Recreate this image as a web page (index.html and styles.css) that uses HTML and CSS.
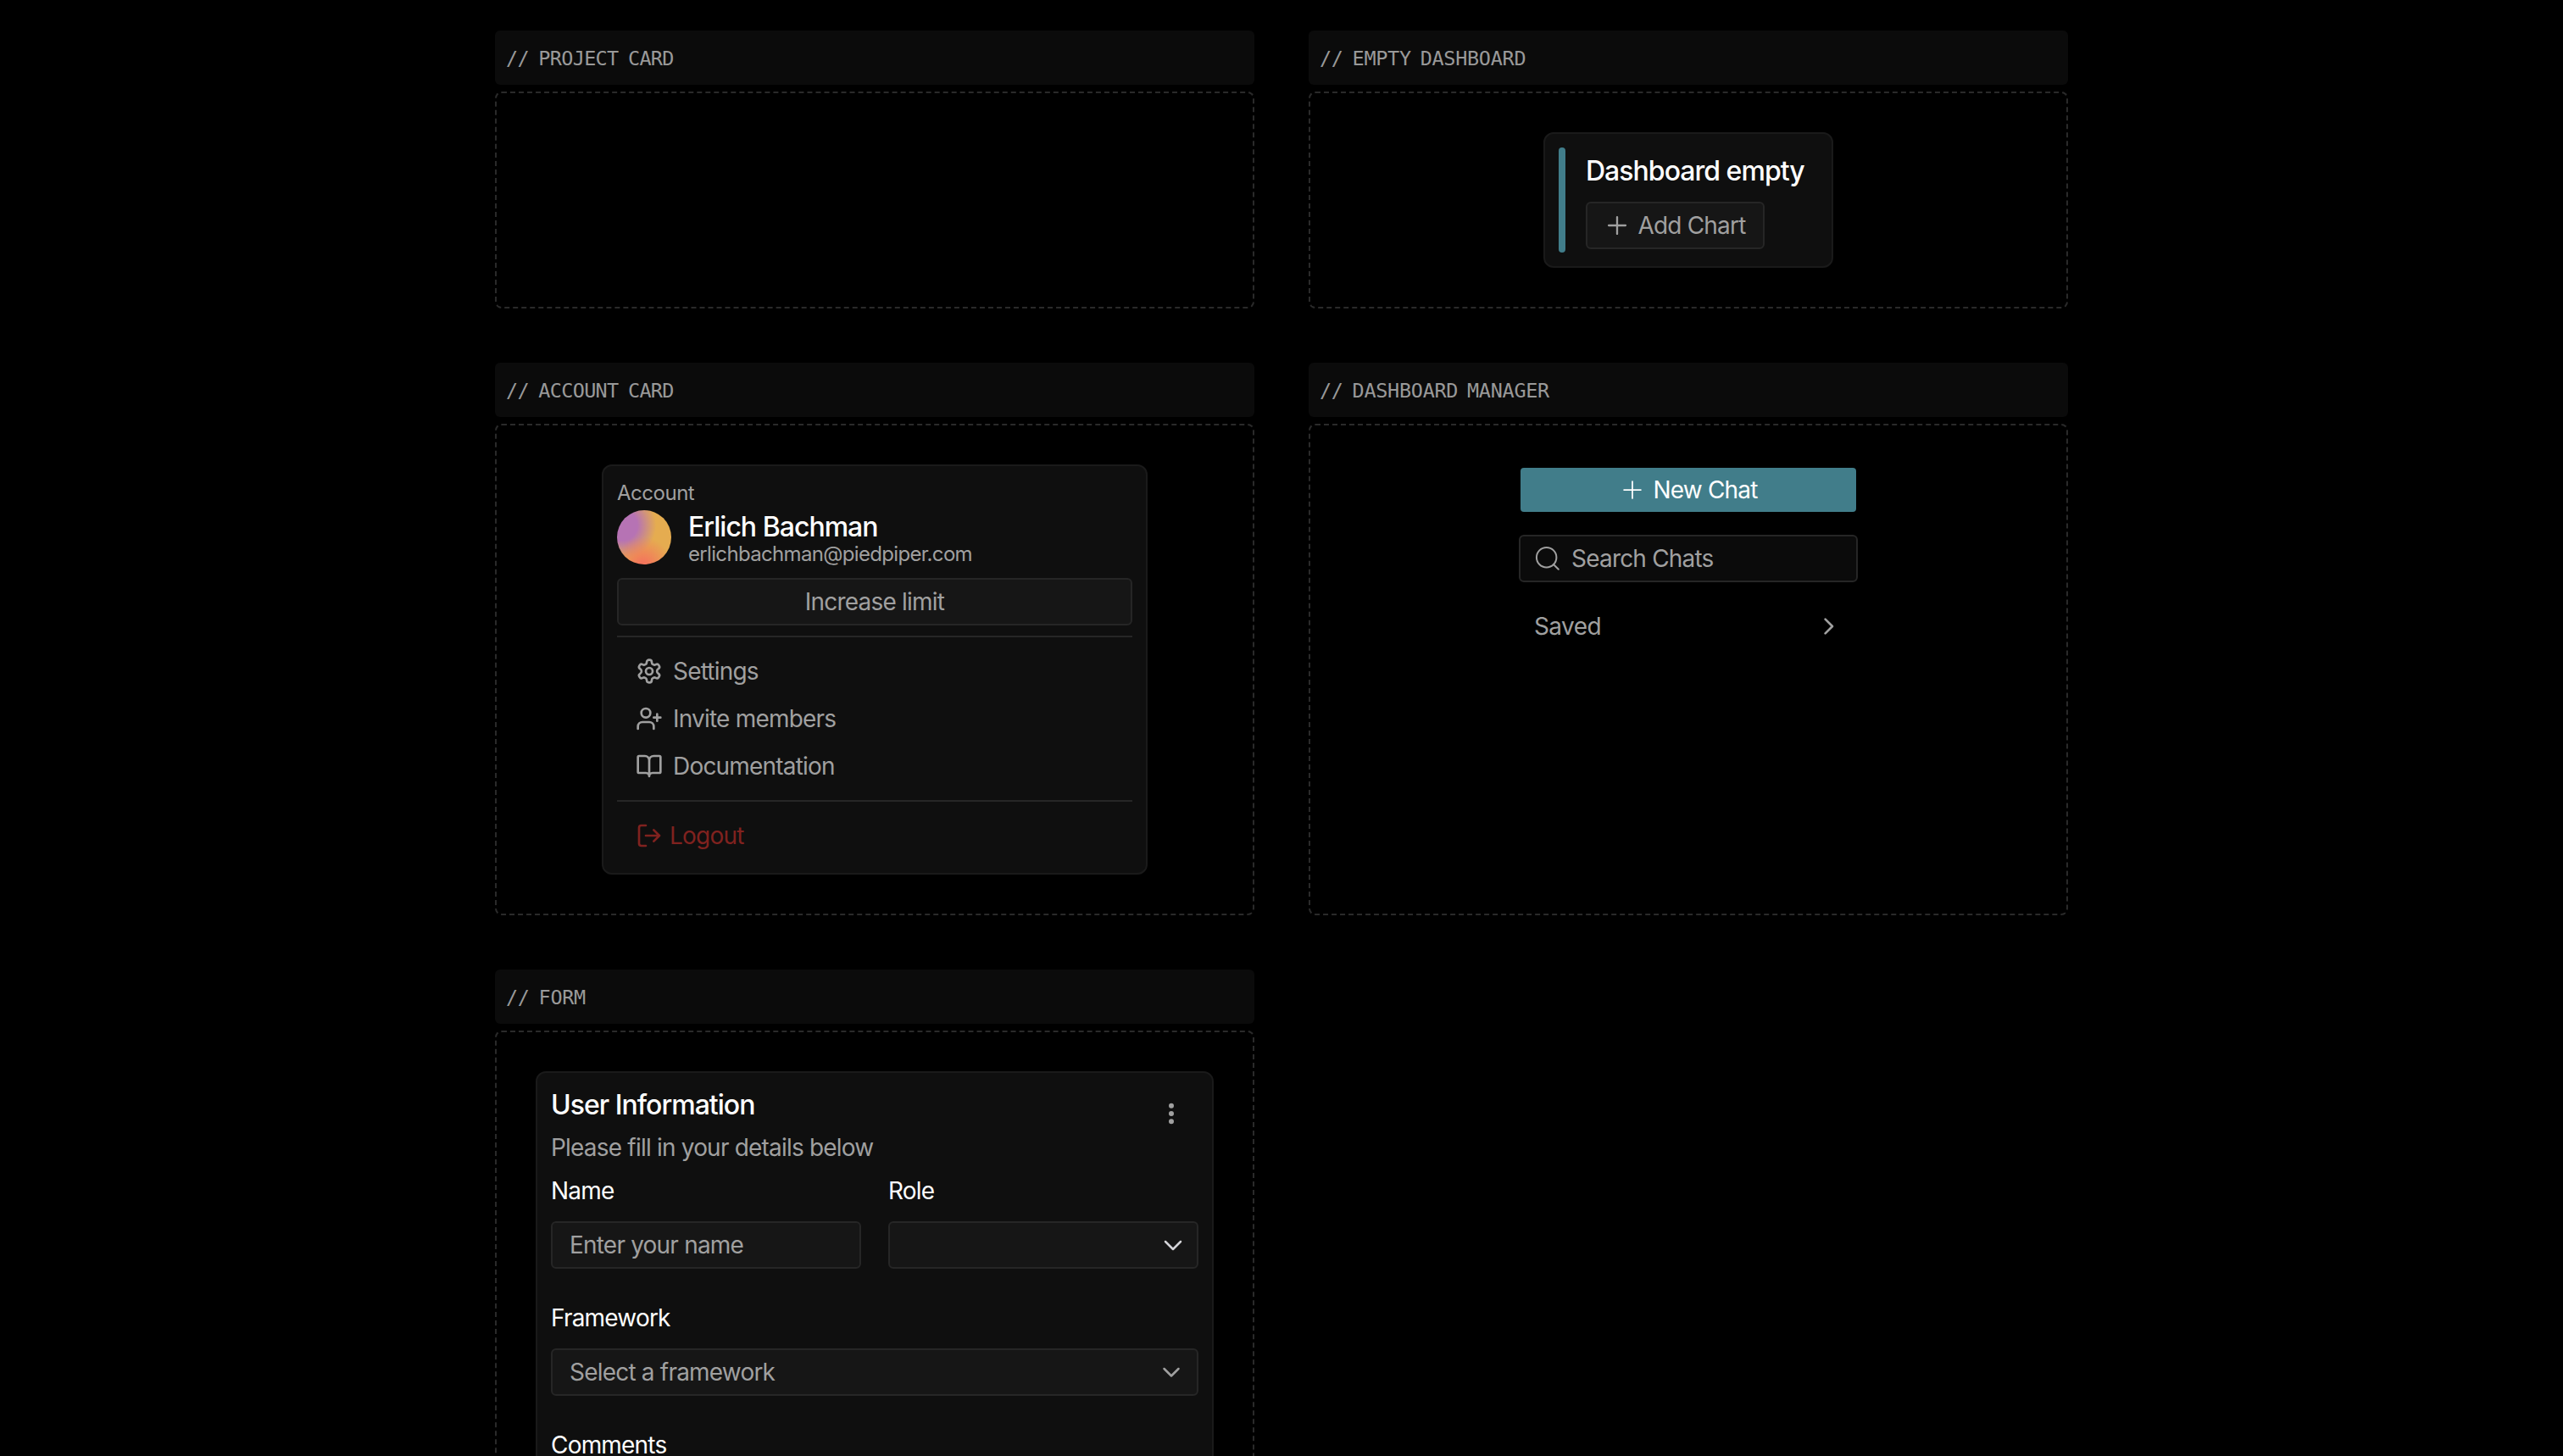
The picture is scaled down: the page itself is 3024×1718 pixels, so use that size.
FILE: index.html
```html
<!DOCTYPE html>
<html lang="en">
<head>
  <meta charset="UTF-8">
  <meta name="viewport" content="width=device-width, initial-scale=1.0">
  <title>Components</title>
  <link rel="stylesheet" href="styles.css">
</head>
<body>
  <main class="showcase">
    <section class="demo">
      <h2 class="demo-title">// PROJECT CARD</h2>
      <div class="demo-box"></div>
    </section>

    <section class="demo">
      <h2 class="demo-title loose">// EMPTY DASHBOARD</h2>
      <div class="demo-box">
        <div class="card empty-card">
          <div class="accent-bar"></div>
          <div class="empty-content">
            <h3 class="heading">Dashboard empty</h3>
            <button class="btn add-btn">
              <svg class="icon plus" viewBox="0 0 24 24"><path d="M3.5 12h17M12 3.5v17"/></svg>
              <span>Add Chart</span>
            </button>
          </div>
        </div>
      </div>
    </section>

    <section class="demo">
      <h2 class="demo-title">// ACCOUNT CARD</h2>
      <div class="demo-box">
        <div class="card account-card">
          <p class="small account-label">Account</p>
          <div class="profile">
            <div class="avatar"></div>
            <div class="profile-text">
              <h3 class="heading">Erlich Bachman</h3>
              <p class="small email">erlichbachman@piedpiper.com</p>
            </div>
          </div>
          <button class="btn limit-btn">Increase limit</button>
          <hr>
          <nav class="menu">
            <a class="menu-item">
              <svg class="icon" viewBox="0 0 24 24"><path d="M12.22 2h-.44a2 2 0 0 0-2 2v.18a2 2 0 0 1-1 1.73l-.43.25a2 2 0 0 1-2 0l-.15-.08a2 2 0 0 0-2.73.73l-.22.38a2 2 0 0 0 .73 2.73l.15.1a2 2 0 0 1 1 1.72v.51a2 2 0 0 1-1 1.74l-.15.09a2 2 0 0 0-.73 2.73l.22.38a2 2 0 0 0 2.73.73l.15-.08a2 2 0 0 1 2 0l.43.25a2 2 0 0 1 1 1.73V20a2 2 0 0 0 2 2h.44a2 2 0 0 0 2-2v-.18a2 2 0 0 1 1-1.73l.43-.25a2 2 0 0 1 2 0l.15.08a2 2 0 0 0 2.73-.73l.22-.39a2 2 0 0 0-.73-2.73l-.15-.08a2 2 0 0 1-1-1.74v-.5a2 2 0 0 1 1-1.74l.15-.09a2 2 0 0 0 .73-2.73l-.22-.38a2 2 0 0 0-2.73-.73l-.15.08a2 2 0 0 1-2 0l-.43-.25a2 2 0 0 1-1-1.73V4a2 2 0 0 0-2-2z"/><circle cx="12" cy="12" r="3"/></svg>
              <span>Settings</span>
            </a>
            <a class="menu-item">
              <svg class="icon" viewBox="0 0 24 24"><path d="M16 21v-2a4 4 0 0 0-4-4H6a4 4 0 0 0-4 4v2"/><circle cx="9" cy="7" r="4"/><path d="M19 8v6M22 11h-6"/></svg>
              <span>Invite members</span>
            </a>
            <a class="menu-item">
              <svg class="icon" viewBox="0 0 24 24"><path d="M12 21V7M3 18a1 1 0 0 1-1-1V4a1 1 0 0 1 1-1h5a4 4 0 0 1 4 4 4 4 0 0 1 4-4h5a1 1 0 0 1 1 1v13a1 1 0 0 1-1 1h-6a3 3 0 0 0-3 3 3 3 0 0 0-3-3z"/></svg>
              <span>Documentation</span>
            </a>
          </nav>
          <hr>
          <a class="menu-item logout">
            <svg class="icon" viewBox="0 0 24 24"><path d="M9 21H5a2 2 0 0 1-2-2V5a2 2 0 0 1 2-2h4M16 17l5-5-5-5M21 12H9"/></svg>
            <span>Logout</span>
          </a>
        </div>
      </div>
    </section>

    <section class="demo">
      <h2 class="demo-title loose">// DASHBOARD MANAGER</h2>
      <div class="demo-box">
        <div class="manager">
          <button class="new-chat">
            <svg class="icon plus thin" viewBox="0 0 24 24"><path d="M3.5 12h17M12 3.5v17"/></svg>
            <span>New Chat</span>
          </button>
          <div class="search">
            <svg class="icon thin" viewBox="0 0 24 24"><circle cx="11" cy="11" r="8.8"/><path d="M17.4 17.4L21.6 21.6"/></svg>
            <span>Search Chats</span>
          </div>
          <div class="saved">
            <span>Saved</span>
            <svg class="icon chevron" viewBox="0 0 24 24"><path d="M8.7 18.3l6.3-6.3-6.3-6.3"/></svg>
          </div>
        </div>
      </div>
    </section>

    <section class="demo">
      <h2 class="demo-title loose">// FORM</h2>
      <div class="demo-box">
        <form class="card form-card">
          <div class="form-head">
            <div>
              <h3 class="heading">User Information</h3>
              <p class="subtitle">Please fill in your details below</p>
            </div>
            <svg class="dots" viewBox="0 0 32 32"><circle cx="16" cy="6.7" r="3"/><circle cx="16" cy="16" r="3"/><circle cx="16" cy="25.3" r="3"/></svg>
          </div>
          <div class="form-row">
            <div class="field">
              <label>Name</label>
              <div class="input">Enter your name</div>
            </div>
            <div class="field">
              <label>Role</label>
              <div class="input role">
                <span></span>
                <svg class="icon" viewBox="0 0 32 32"><path d="M7 12l9 9 9-9"/></svg>
              </div>
            </div>
          </div>
          <div class="field">
            <label>Framework</label>
            <div class="input">
              <span>Select a framework</span>
              <svg class="icon" viewBox="0 0 32 32"><path d="M7.5 12l8.5 8.5 8.5-8.5"/></svg>
            </div>
          </div>
          <div class="field">
            <label>Comments</label>
          </div>
        </form>
      </div>
    </section>
  </main>
</body>
</html>
```

FILE: styles.css
```css
* {
  box-sizing: border-box;
  margin: 0;
  padding: 0;
}

body {
  height: 1718px;
  overflow: hidden;
  background: #000;
  color: #a0a0a0;
  font-family: Inter, "Liberation Sans", sans-serif;
  font-size: 28px;
  line-height: 40px;
  letter-spacing: -0.8px;
}

.showcase {
  display: grid;
  grid-template-columns: 896px 896px;
  gap: 64px;
  width: 1856px;
  margin: 0 auto;
  padding-top: 36px;
}

.demo {
  display: flex;
  flex-direction: column;
  gap: 8px;
}

.demo-title {
  height: 64px;
  padding-left: 13px;
  border-radius: 6px;
  background: #0b0b0b;
  color: #999;
  font-family: "DejaVu Sans Mono", monospace;
  font-size: 23.5px;
  font-weight: 400;
  line-height: 66px;
  letter-spacing: -0.7px;
  word-spacing: -2px;
}

.demo-title.loose {
  letter-spacing: -0.3px;
  word-spacing: -3px;
}

.demo-box {
  flex: 1;
  display: flex;
  justify-content: center;
  align-items: flex-start;
  min-height: 256px;
  padding: 46px;
  border: 2px dashed #2a2a2a;
  border-radius: 8px;
}

.card {
  padding: 16px;
  border: 2px solid #1a1a1a;
  border-radius: 12px;
  background: #0f0f0f;
}

.heading {
  color: #fff;
  font-size: 32px;
  font-weight: 500;
  line-height: 40px;
  letter-spacing: -0.98px;
}

.small {
  font-size: 24px;
  line-height: 32px;
  letter-spacing: -0.48px;
}

.icon {
  flex: none;
  width: 32px;
  height: 32px;
  fill: none;
  stroke: currentColor;
  stroke-width: 2;
  stroke-linecap: round;
  stroke-linejoin: round;
}

.thin {
  stroke-width: 1.5;
}

.btn {
  display: flex;
  align-items: center;
  justify-content: center;
  height: 56px;
  border: 2px solid #262626;
  border-radius: 6px;
  background: #161616;
  color: inherit;
  font: inherit;
  letter-spacing: inherit;
}

/* empty dashboard */
.empty-card {
  display: flex;
  gap: 24px;
  width: 342px;
  height: 160px;
}

.accent-bar {
  width: 8px;
  border-radius: 4px;
  background: #417d8a;
}

.empty-content {
  padding-top: 8px;
  white-space: nowrap;
}

.add-btn {
  width: 211px;
  margin-top: 16px;
  padding-left: 1px;
  gap: 10px;
}

.plus {
  width: 28px;
  height: 28px;
}

/* account */
.account-card {
  width: 644px;
  height: 484px;
}

.account-label {
  height: 36px;
}

.profile {
  display: flex;
  gap: 20px;
  height: 64px;
  margin-bottom: 16px;
}

.avatar {
  width: 64px;
  height: 64px;
  border-radius: 50%;
  background:
    radial-gradient(circle at 48% 102%, #f4765c 6%, rgba(244, 118, 92, 0) 46%),
    radial-gradient(circle at 10% 28%, #b673b4 24%, rgba(182, 115, 180, 0) 54%),
    #e5ac50;
}

.profile-text .email {
  line-height: 24px;
  letter-spacing: -0.67px;
}

.limit-btn {
  width: 100%;
  margin-bottom: 12px;
}

hr {
  height: 2px;
  border: none;
  background: #262626;
}

.menu {
  padding: 12px 0;
}

.menu-item {
  display: flex;
  align-items: center;
  gap: 12px;
  height: 56px;
  padding-left: 22px;
}

.menu + hr {
  margin-bottom: 12px;
}

.logout {
  gap: 8px;
  color: #80221f;
}

/* dashboard manager */
.manager {
  width: 400px;
  padding-top: 4px;
}

.new-chat {
  display: flex;
  align-items: center;
  justify-content: center;
  gap: 10px;
  width: 396px;
  height: 52px;
  margin: 0 auto 27px;
  padding-left: 2px;
  border: none;
  border-radius: 4px;
  background: #417d8a;
  color: #fff;
  font: inherit;
  letter-spacing: inherit;
}

.search {
  display: flex;
  align-items: center;
  gap: 12px;
  height: 56px;
  padding-left: 16px;
  border: 2px solid #262626;
  border-radius: 6px;
  background: #0b0b0b;
}

.saved {
  display: flex;
  align-items: center;
  justify-content: space-between;
  height: 56px;
  margin-top: 24px;
  padding: 0 18px;
  letter-spacing: -0.6px;
}

/* form */
.form-card {
  width: 800px;
  height: 600px;
}

.form-head {
  display: flex;
  justify-content: space-between;
  height: 102px;
  padding-top: 2px;
}

.subtitle {
  margin-top: 10px;
}

.dots {
  width: 32px;
  height: 32px;
  margin: 14px 16px 0 0;
  fill: #a0a0a0;
}

.form-row {
  display: flex;
  gap: 32px;
}

.field {
  flex: 1;
  height: 150px;
}

label {
  display: block;
  height: 57px;
  padding-top: 1px;
  color: #fff;
}

.input {
  display: flex;
  align-items: center;
  justify-content: space-between;
  height: 56px;
  padding: 0 14px 0 20px;
  border: 2px solid #262626;
  border-radius: 6px;
  background: #161616;
}

.input .icon {
  stroke-width: 2.5;
}

.role {
  padding-right: 12px;
}

.role .icon {
  color: #d4d4d8;
}
```
